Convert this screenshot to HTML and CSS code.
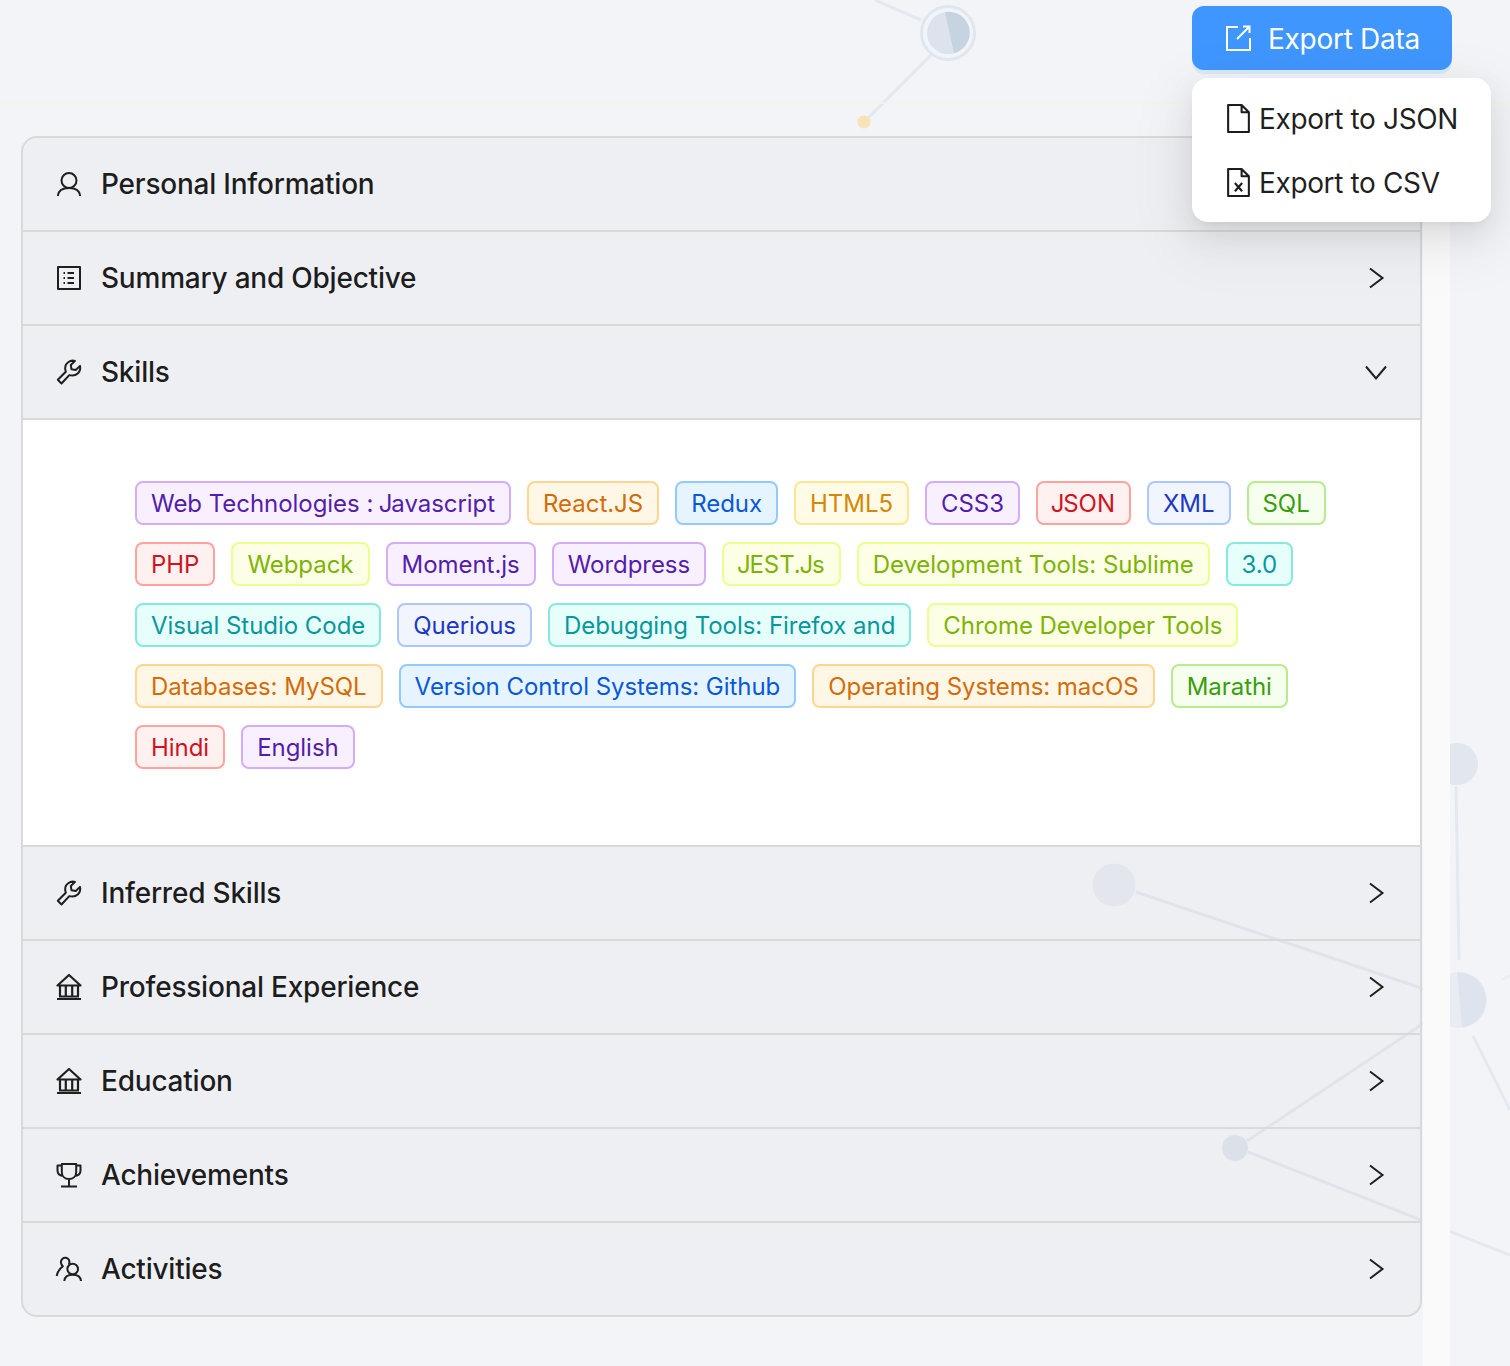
FILE: index.html
```html
<!DOCTYPE html>
<html lang="en">
<head>
<meta charset="utf-8">
<title>Resume</title>
<link rel="stylesheet" href="styles.css">
</head>
<body>
<div class="page">
  <svg class="network" viewBox="0 0 1510 1366" aria-hidden="true">
    <g class="links">
      <path d="M875 0 921 20"/>
      <path d="M932 54 868 118"/>
      <path d="M1136 892 1436 993"/>
      <path d="M1247 1141 1436 1015"/>
      <path d="M1248 1152 1510 1255"/>
      <path d="M1456 786 1459 960"/>
      <path d="M1473 1036 1510 1110"/>
      <path class="faint" d="M1502 980 1510 975"/>
    </g>
    <circle class="ring" cx="948" cy="33" r="26.5"/>
    <circle class="n1a" cx="948" cy="33" r="21"/>
    <path class="n1b" d="M945 12.2A21 21 0 0 1 954 53.2Z"/>
    <circle class="dot" cx="864" cy="122" r="6.5"/>
    <circle class="n2" cx="1114" cy="885" r="21.5"/>
    <circle class="n3" cx="1235" cy="1148" r="13"/>
    <circle class="n4" cx="1457" cy="764" r="21"/>
    <circle class="n5a" cx="1459" cy="1000" r="28"/>
    <path class="n5b" d="M1457 972.100A28 28 0 0 1 1462 1027.800Z"/>
  </svg>

  <header class="topbar">
    <div class="export">
      <button class="export-btn" type="button">
        <svg class="ico-export" viewBox="0 0 26 26"><path d="M13 2H2v23h23V13M12 14 24.500 1.500M18 1.500h6.500V8"/></svg>
        <span class="export-text">Export Data</span>
      </button>
      <div class="export-menu">
        <div class="export-item">
          <svg class="ico-file" viewBox="0 0 22 28"><path d="M1 1h13l7 7v19H1zM14 1v7h7"/></svg>
          <span class="export-text">Export to JSON</span>
        </div>
        <div class="export-item">
          <svg class="ico-file" viewBox="0 0 22 28"><path d="M1 1h13l7 7v19H1zM14 1v7h7M7.500 14.500l7 8M14.500 14.500l-7 8"/></svg>
          <span class="export-text">Export to CSV</span>
        </div>
      </div>
    </div>
  </header>

  <main class="content">
    <section class="panel">
      <div class="row">
        <svg class="ico" viewBox="0 0 28 28"><circle cx="14" cy="10.500" r="7.500"/><path d="M2.800 26c.5-5.500 5-8 11.200-8s10.700 2.500 11.200 8"/></svg>
        <span class="label">Personal Information</span>
        <svg class="chev" viewBox="0 0 22 22"><path d="M5 1.500 17.500 11 5 20.500"/></svg>
      </div>
      <div class="row">
        <svg class="ico" viewBox="0 0 28 28"><rect x="3" y="3" width="22" height="22"/><path d="M8.500 9h1.500M8.500 14h1.500M8.500 19h1.500M12.500 9H19M12.500 14H19M12.500 19H19"/></svg>
        <span class="label">Summary and Objective</span>
        <svg class="chev" viewBox="0 0 22 22"><path d="M5 1.500 17.500 11 5 20.500"/></svg>
      </div>
      <div class="row">
        <svg class="ico" viewBox="0 0 28 28"><path d="M2.800 21.800 10.800 13.800C9.500 9.800 10.500 6.200 13.200 4.200 15.300 2.600 17.500 2.300 20 2.900L15.800 7 16.500 11.300 20.800 12 25 7.900C25.600 10.500 25 13.200 23 15.200 20.600 17.500 17.500 18 14.300 17.100L6.500 25.500Z"/></svg>
        <span class="label">Skills</span>
        <svg class="chev" viewBox="0 0 22 22"><path d="M1 5.500 11 17.500 21 5.500"/></svg>
      </div>
      <div class="skills">
        <span class="tag purple">Web Technologies : <span class="j">J</span>avascript</span>
        <span class="tag orange">React.JS</span>
        <span class="tag blue">Redux</span>
        <span class="tag gold">HTML5</span>
        <span class="tag purple">CSS3</span>
        <span class="tag red"><span class="j">J</span>SON</span>
        <span class="tag geek">XML</span>
        <span class="tag green">SQL</span>
        <span class="tag red">PHP</span>
        <span class="tag lime">Webpack</span>
        <span class="tag purple">Moment.js</span>
        <span class="tag purple">Wordpress</span>
        <span class="tag lime"><span class="j">J</span>EST.<span class="j">J</span>s</span>
        <span class="tag lime">Development Tools: Sublime</span>
        <span class="tag cyan">3.0</span>
        <span class="tag cyan">Visual Studio Code</span>
        <span class="tag geek">Querious</span>
        <span class="tag cyan">Debugging Tools: Firefox and</span>
        <span class="tag lime">Chrome Developer Tools</span>
        <span class="tag orange">Databases: MySQL</span>
        <span class="tag blue">Version Control Systems: Github</span>
        <span class="tag orange">Operating Systems: macOS</span>
        <span class="tag green">Marathi</span>
        <span class="tag red">Hindi</span>
        <span class="tag purple">English</span>
      </div>
      <div class="row row-top">
        <svg class="ico" viewBox="0 0 28 28"><path d="M2.800 21.800 10.800 13.800C9.500 9.800 10.500 6.200 13.200 4.200 15.300 2.600 17.500 2.300 20 2.900L15.800 7 16.500 11.300 20.800 12 25 7.900C25.600 10.500 25 13.200 23 15.200 20.600 17.500 17.500 18 14.300 17.100L6.500 25.500Z"/></svg>
        <span class="label">Inferred Skills</span>
        <svg class="chev" viewBox="0 0 22 22"><path d="M5 1.500 17.500 11 5 20.500"/></svg>
      </div>
      <div class="row">
        <svg class="ico ico-bank" viewBox="0 0 28 28"><path d="M14 2 2.500 12.500h23ZM4 23.500h20M2 26h24M5 13v10M10.800 13v10M17.200 13v10M23 13v10"/></svg>
        <span class="label">Professional Experience</span>
        <svg class="chev" viewBox="0 0 22 22"><path d="M5 1.500 17.500 11 5 20.500"/></svg>
      </div>
      <div class="row">
        <svg class="ico ico-bank" viewBox="0 0 28 28"><path d="M14 2 2.500 12.500h23ZM4 23.500h20M2 26h24M5 13v10M10.800 13v10M17.200 13v10M23 13v10"/></svg>
        <span class="label">Education</span>
        <svg class="chev" viewBox="0 0 22 22"><path d="M5 1.500 17.500 11 5 20.500"/></svg>
      </div>
      <div class="row">
        <svg class="ico" viewBox="0 0 28 28"><path d="M6.800 3h14.400v8c0 4.200-3 7-7.200 7s-7.200-2.800-7.200-7ZM6.800 4.500H2.500v5c0 2.900 2 5 5.500 5.500M21.200 4.500h4.300v5c0 2.900-2 5-5.500 5.500M14 18v7M6 25.500h16"/></svg>
        <span class="label">Achievements</span>
        <svg class="chev" viewBox="0 0 22 22"><path d="M5 1.500 17.500 11 5 20.500"/></svg>
      </div>
      <div class="row last">
        <svg class="ico" viewBox="0 0 28 28"><circle cx="17.700" cy="14" r="5.300"/><path d="M9.300 26c.3-3.800 3.600-6.200 8.400-6.200s8 2.400 8.300 6.200M13.800 9.500C14.800 8 14.700 6.500 13.700 4.500 12.500 2.700 9.500 2.200 7.500 3.700 5.200 5.600 5.500 9 7.800 11.300 4.500 13.500 2.500 17 1.700 21"/></svg>
        <span class="label">Activities</span>
        <svg class="chev" viewBox="0 0 22 22"><path d="M5 1.500 17.500 11 5 20.500"/></svg>
      </div>
    </section>
    <aside class="rail"></aside>
  </main>
</div>
</body>
</html>
```

FILE: styles.css
```css
* { box-sizing: border-box; }

html, body { margin: 0; padding: 0; }

body {
  background: #f3f4f8;
  color: rgba(0, 0, 0, .88);
  font-family: Inter, "Liberation Sans", sans-serif;
}

.page {
  position: relative;
  display: flex;
  flex-direction: column;
  width: 1510px;
  height: 1366px;
  overflow: hidden;
}

.network {
  position: absolute;
  inset: 0;
  width: 1510px;
  height: 1366px;
}

.links path { fill: none; stroke: #e4e9f1; stroke-width: 3; }
.links .faint { stroke: #eceaea; stroke-width: 2; }
.ring { fill: none; stroke: #e0e6ef; stroke-width: 3; }
.n1a { fill: #dde3ec; }
.n1b { fill: #c6d3e0; }
.dot { fill: #f8e3b4; }
.n2 { fill: #e8ecf2; }
.n3 { fill: #e1e6ee; }
.n4 { fill: #e1e6ef; }
.n5a { fill: #e9edf3; }
.n5b { fill: #dee4ee; }

.topbar {
  position: relative;
  display: flex;
  justify-content: flex-end;
  flex: none;
  height: 104px;
  padding: 6px 58px 0 0;
  border-bottom: 2px solid rgba(244, 244, 236, .8);
}

.export { position: relative; width: 260px; height: 64px; z-index: 3; }

.export-btn {
  display: flex;
  align-items: center;
  gap: 17px;
  width: 260px;
  height: 64px;
  padding: 0 0 0 33px;
  border: 0;
  border-radius: 12px;
  background: #4096ff;
  color: #fff;
  font: 400 28px/42px Inter, "Liberation Sans", sans-serif;
  letter-spacing: -.28px;
  box-shadow: 0 4px 0 rgba(5, 145, 255, .1);
}

.export-text { position: relative; top: 1px; }

.export-menu {
  position: absolute;
  top: 72px;
  left: 0;
  width: 299px;
  height: 144px;
  padding: 8px 0 8px 35px;
  border-radius: 16px;
  background: #fff;
  box-shadow: 0 12px 32px 0 rgba(0, 0, 0, .08), 0 6px 12px -8px rgba(0, 0, 0, .12), 0 18px 56px 16px rgba(0, 0, 0, .05);
}

.export-item {
  display: flex;
  align-items: center;
  gap: 9px;
  height: 64px;
  font-size: 28px;
  letter-spacing: -.36px;
  white-space: nowrap;
}

.ico-export { width: 26px; height: 26px; flex: none; }
.ico-export path { fill: none; stroke: #fff; stroke-width: 2; }

.ico-file { width: 23px; height: 29px; flex: none; }
.ico-file path { fill: none; stroke: #1c1c1c; stroke-width: 2; stroke-linejoin: round; }

.content {
  position: relative;
  display: flex;
  flex: 1;
  padding: 0 60px 0 0;
}

.panel {
  flex: none;
  align-self: flex-start;
  width: 1401px;
  margin: 32px 0 0 21px;
  border: 2px solid #d9d9d9;
  border-radius: 16px;
  overflow: hidden;
}

.rail {
  flex: none;
  width: 27px;
  margin-left: 1px;
  background: #fafafa;
}

.row {
  display: flex;
  align-items: center;
  height: 94px;
  padding: 0 33px 0 32px;
  border-bottom: 2px solid #d9d9d9;
  background: rgba(0, 0, 0, .02);
}

.row.row-top { height: 96px; border-top: 2px solid #d9d9d9; }
.row.last { border-bottom: 0; height: 92px; }

.ico { width: 28px; height: 28px; flex: none; }
.ico path, .ico circle, .ico rect { fill: none; stroke: #1f1f1f; stroke-width: 2; stroke-linejoin: round; }
.ico-bank path { stroke-width: 2.200; }

.label {
  flex: 1;
  margin-left: 18px;
  font-size: 28px;
  font-weight: 500;
  letter-spacing: -.22px;
  line-height: 40px;
}

.chev { width: 22px; height: 22px; flex: none; }
.chev path { fill: none; stroke: #1f1f1f; stroke-width: 2; }

.skills {
  display: flex;
  flex-wrap: wrap;
  gap: 17px 16px;
  height: 425px;
  padding: 61px 50px 0 112px;
  align-content: flex-start;
  background: #fff;
}

.tag {
  height: 44px;
  padding: 0 14px;
  border: 2px solid;
  border-radius: 8px;
  font-size: 24px;
  letter-spacing: -.04px;
  line-height: 42px;
  white-space: nowrap;
}

.j { margin: 0 -1.200px; }

.purple { background: #f9f0ff; border-color: #d3adf7; color: #531dab; }
.orange { background: #fff7e6; border-color: #ffd591; color: #d46b08; }
.blue   { background: #e6f4ff; border-color: #91caff; color: #0958d9; }
.gold   { background: #fffbe6; border-color: #ffe58f; color: #d48806; }
.red    { background: #fff1f0; border-color: #ffa39e; color: #cf1322; }
.geek   { background: #f0f5ff; border-color: #adc6ff; color: #1d39c4; }
.green  { background: #f6ffed; border-color: #b7eb8f; color: #389e0d; }
.lime   { background: #fcffe6; border-color: #eaff8f; color: #7cb305; }
.cyan   { background: #e6fffb; border-color: #87e8de; color: #08979c; }
```
